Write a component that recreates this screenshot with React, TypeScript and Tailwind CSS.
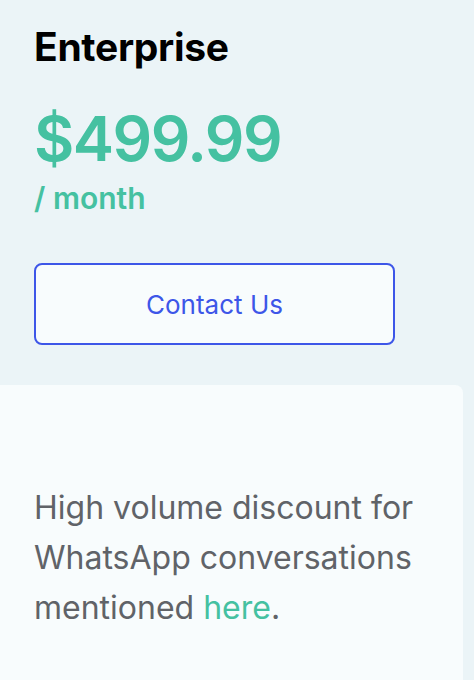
import React from "react";

export default function App() {
  return (
    <div className="min-h-screen w-[474px] overflow-hidden bg-[#ebf4f7] font-['Inter',sans-serif]">
      {/* Plan header */}
      <div className="px-[34px] pt-[23px]">
        <h2 className="text-[39px] font-bold leading-[48px] tracking-[-0.3px] text-black">Enterprise</h2>
        <p className="mt-[36px] text-[62px] font-semibold leading-[64px] tracking-[-1.5px] text-[#45c1a1]">$499.99</p>
        <p className="mt-[9px] text-[30px] font-semibold leading-[36px] text-[#45c1a1]">/ month</p>
        <button className="mt-[47px] flex h-[82px] w-[361px] items-center justify-center rounded-[8px] border-2 border-[#3d56e8] bg-[#f8fcfd] text-[26px] text-[#3d56e8]">
          Contact Us
        </button>
      </div>

      {/* Feature card */}
      <div className="mt-[40px] w-[463px] rounded-tr-[8px] bg-[#f8fcfd] px-[34px] pt-[98px] pb-[80px]">
        <p className="text-[32px] leading-[50px] text-[#606368]">
          High volume discount for WhatsApp conversations mentioned{" "}
          <a className="text-[#45c1a1]">here</a>.
        </p>
      </div>
    </div>
  );
}
